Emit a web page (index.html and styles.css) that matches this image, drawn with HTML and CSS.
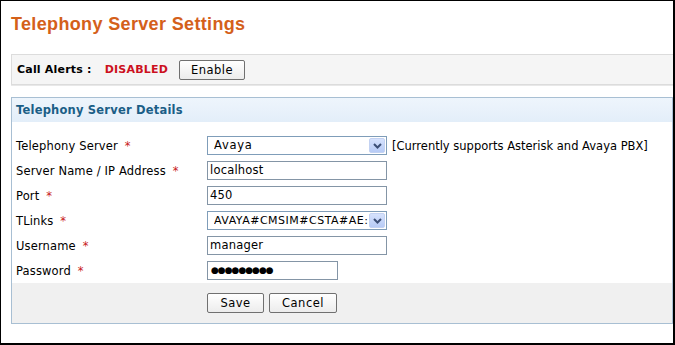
FILE: index.html
```html
<!DOCTYPE html>
<html>
<head>
<meta charset="utf-8">
<link rel="stylesheet" href="styles.css">
</head>
<body>
<div class="page">
  <h1 class="title">Telephony Server Settings</h1>
  <div class="alert-bar">
    <span class="alert-label">Call Alerts :</span>
    <span class="status">DISABLED</span>
    <button class="btn btn-enable">Enable</button>
  </div>
  <div class="panel">
    <div class="panel-head">Telephony Server Details</div>
    <div class="form">
      <div class="row">
        <div class="lbl">Telephony Server <span class="req">*</span></div>
        <div class="ctl">
          <div class="select">
            <span class="select-text">Avaya</span>
            <span class="arrow"><svg width="9" height="6" viewBox="0 0 9 6"><path d="M1 1 L4.5 4.5 L8 1" fill="none" stroke="#3c4f76" stroke-width="2"/></svg></span>
          </div>
          <span class="note">[Currently supports Asterisk and Avaya PBX]</span>
        </div>
      </div>
      <div class="row">
        <div class="lbl">Server Name / IP Address <span class="req">*</span></div>
        <div class="ctl"><div class="input">localhost</div></div>
      </div>
      <div class="row">
        <div class="lbl">Port <span class="req">*</span></div>
        <div class="ctl"><div class="input">450</div></div>
      </div>
      <div class="row">
        <div class="lbl">TLinks <span class="req">*</span></div>
        <div class="ctl">
          <div class="select">
            <span class="select-text caps">AVAYA#CMSIM#CSTA#AE:</span>
            <span class="arrow"><svg width="9" height="6" viewBox="0 0 9 6"><path d="M1 1 L4.5 4.5 L8 1" fill="none" stroke="#3c4f76" stroke-width="2"/></svg></span>
          </div>
        </div>
      </div>
      <div class="row">
        <div class="lbl">Username <span class="req">*</span></div>
        <div class="ctl"><div class="input">manager</div></div>
      </div>
      <div class="row">
        <div class="lbl">Password <span class="req">*</span></div>
        <div class="ctl"><div class="input input-short dots">●●●●●●●●●</div></div>
      </div>
    </div>
    <div class="actions">
      <button class="btn btn-save">Save</button>
      <button class="btn btn-cancel">Cancel</button>
    </div>
  </div>
</div>
</body>
</html>
```
FILE: styles.css
```css
html, body {
  margin: 0;
  padding: 0;
  background: #fff;
}
.page {
  box-sizing: border-box;
  width: 675px;
  height: 345px;
  border: 1px solid #000;
  border-right-width: 2px;
  border-bottom-width: 2px;
  padding-left: 10px;
  font-family: "DejaVu Sans", Verdana, sans-serif;
  font-size: 11.5px;
  letter-spacing: 0.15px;
  color: #000;
  overflow: hidden;
}
.title {
  margin: 12px 0 0 0;
  font-family: "Liberation Sans", Arial, sans-serif;
  font-weight: bold;
  font-size: 18px;
  line-height: 22px;
  color: #d4601a;
  letter-spacing: 0.35px;
}
.alert-bar {
  margin-top: 19px;
  height: 29px;
  background: #f5f5f5;
  border: 1px solid #dcdcdc;
  border-right: none;
  display: flex;
  align-items: center;
  padding-left: 5px;
  box-shadow: 0 1px 0 #e8e8e8;
  font-size: 11px;
  letter-spacing: 0.2px;
}
.alert-label {
  font-weight: bold;
}
.status {
  font-weight: bold;
  color: #cc1020;
  margin-left: 13px;
}
.btn {
  box-sizing: border-box;
  height: 20px;
  border: 1px solid #707070;
  border-radius: 2px;
  background: linear-gradient(#ffffff, #ececec);
  font-family: "DejaVu Sans", Verdana, sans-serif;
  font-size: 11.5px;
  color: #000;
  padding: 0;
  letter-spacing: 0.5px;
}
.btn-enable {
  width: 66px;
  margin-left: 11px;
}
.panel {
  margin-top: 12px;
  border: 1px solid #a8bfd3;
}
.panel-head {
  height: 24px;
  line-height: 24px;
  padding-left: 4px;
  background: linear-gradient(#eef5fc, #e3eef9);
  font-weight: bold;
  color: #1b5e86;
  letter-spacing: 0.2px;
}
.form {
  padding: 11px 0 0 4px;
}
.row {
  display: flex;
  align-items: center;
  height: 25px;
}
.lbl {
  width: 191px;
  flex: none;
}
.req {
  color: #c81a1a;
  margin-left: 3px;
}
.ctl {
  display: flex;
  align-items: center;
}
.input, .select {
  box-sizing: border-box;
  width: 180px;
  height: 19px;
  border: 1px solid #8495a6;
  background: #fff;
  font-size: 11.5px;
  line-height: 17px;
  padding-left: 2px;
  letter-spacing: 0.2px;
}
.input-short {
  width: 131px;
}
.dots {
  font-size: 9px;
  letter-spacing: -1px;
  padding-left: 3px;
}
.select {
  display: flex;
  align-items: center;
  justify-content: space-between;
  padding: 0 1px 0 6px;
  border-color: #7f9db9;
}
.select-text {
  letter-spacing: 0.7px;
  white-space: nowrap;
  overflow: hidden;
}
.caps {
  font-size: 11px;
  letter-spacing: 0.5px;
}
.arrow {
  flex: none;
  box-sizing: border-box;
  width: 16px;
  height: 15px;
  background: linear-gradient(#d6e2fd, #b7cbf6);
  border: 1px solid #c3d2f2;
  border-radius: 2px;
  display: flex;
  align-items: center;
  justify-content: center;
}
.note {
  margin-left: 5px;
  letter-spacing: 0;
}
.actions {
  height: 40px;
  background: #f0f0f0;
  display: flex;
  align-items: center;
  padding-left: 195px;
  gap: 5px;
}
.btn-save {
  width: 57px;
}
.btn-cancel {
  width: 68px;
}
```
